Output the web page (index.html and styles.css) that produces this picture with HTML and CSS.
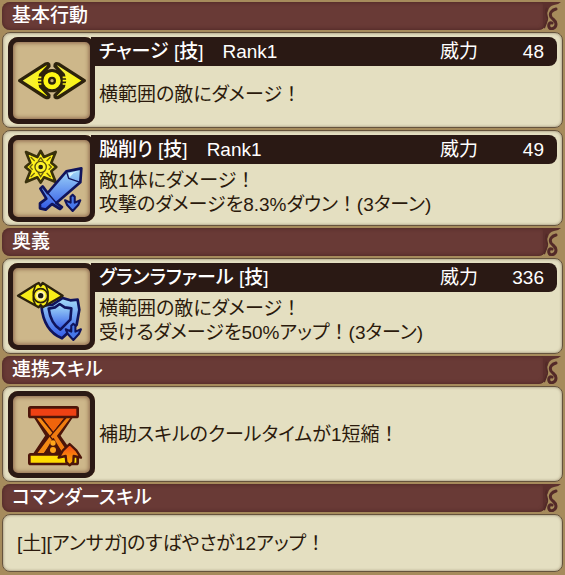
FILE: index.html
```html
<!DOCTYPE html>
<html lang="ja">
<head>
  <meta charset="UTF-8" />
  <meta name="viewport" content="width=device-width, initial-scale=1.0"/>
  <title>基本行動</title>
  <link rel="stylesheet" href="styles.css">
</head>
<body>
  <!-- shared shapes -->
  <svg class="defs" aria-hidden="true">
    <defs>
      <linearGradient id="blue" x1="0" y1="0" x2="0" y2="1">
        <stop offset="0" stop-color="#a4dcf8"/>
        <stop offset="1" stop-color="#3158e8"/>
      </linearGradient>
      <linearGradient id="yellow" x1="0" y1="0" x2="1" y2="0">
        <stop offset="0" stop-color="#f0ea50"/>
        <stop offset="1" stop-color="#fffb00"/>
      </linearGradient>
      <linearGradient id="fire" x1="0" y1="0" x2="0" y2="1">
        <stop offset="0" stop-color="#f2441a"/>
        <stop offset="1" stop-color="#ffb800"/>
      </linearGradient>
      <symbol id="curl" viewBox="0 0 18 28">
        <path d="M0 0H18Q15 3 11 3Q6 4 5 9L3 13Q4 16 3 21L0 26Z" fill="#5c302d"/>
        <path d="M13 7C9 8 6 11 8 15C10 18 13 18 13 22C13 27 7 28 6 25C5 22 7 20 9 21" fill="none" stroke="#532a28" stroke-width="3" stroke-linecap="round"/>
        <path d="M4 6C1 11 5 13 4 18C3 21 2 24 1 26" fill="none" stroke="#532a28" stroke-width="2"/>
      </symbol>
      <symbol id="down" viewBox="0 0 54 56">
        <path d="M27 4L33 10V27L49 20L43 34L27 51L11 34L5 20L21 27V10Z" fill="#4676ea" stroke="#10145c" stroke-width="6" stroke-linejoin="round"/>
      </symbol>
    </defs>
  </svg>

  <main class="skills">
    <section class="group">
      <h2 class="heading"><span class="heading-text">基本行動</span><svg class="curl"><use href="#curl"/></svg></h2>
      <article class="card">
        <svg class="icon" viewBox="12 9 261 261">
          <g fill="url(#yellow)" stroke="#2c220c" stroke-width="10" stroke-linejoin="round">
            <path d="M47 140L123 91Q136 85 135 96L110 122L106 140L110 158L135 184Q136 195 123 189Z"/>
            <path d="M241 140L165 91Q152 85 153 96L178 122L182 140L178 158L153 184Q152 195 165 189Z"/>
          </g>
          <circle cx="144" cy="140" r="35" fill="#2c220c"/>
          <circle cx="144" cy="140" r="19" fill="none" stroke="#fff714" stroke-width="14"/>
          <circle cx="144" cy="140" r="5" fill="#c5ab72"/>
          <path d="M95 130H112M95 140H112M95 150H112M176 130H193M176 140H193M176 150H193" stroke="#fff714" stroke-width="5"/>
        </svg>
        <div class="body">
          <header class="bar">
            <h3 class="name">チャージ [技]　Rank1</h3>
            <span class="power">威力</span><span class="value">48</span>
          </header>
          <p class="text">横範囲の敵にダメージ<span class="mark">！</span></p>
        </div>
      </article>
      <article class="card">
        <svg class="icon" viewBox="12 9 261 261">
          <path d="M110 57L120 75L155 60L142 92L157 105L142 118L155 150L120 136L110 152L100 136L66 150L79 118L64 105L79 92L66 60L100 75Z" fill="#fff21c" stroke="#39310c" stroke-width="8" stroke-linejoin="round"/>
          <path d="M110 76L118 89M110 76L102 89M134 97L142 105L134 113M86 97L78 105L86 113M102 121L110 134L118 121M128 87L140 75M92 87L80 75M128 123L140 135M92 123L80 135" fill="none" stroke="#6d6212" stroke-width="4"/>
          <circle cx="110" cy="105" r="17" fill="#fff52a" stroke="#5d530e" stroke-width="4"/>
          <circle cx="110" cy="105" r="7" fill="#292412"/>
          <g fill="url(#blue)" stroke="#10145c" stroke-width="8" stroke-linejoin="round">
            <path d="M187 118L232 109L229 151L157 213L174 225L168 231L144 216L125 233L108 229V214L127 200L109 170L116 163L131 183Z"/>
            <path d="M187 118L194 139L229 151M131 183L157 213" fill="none" stroke-width="4"/>
          </g>
          <path d="M194 124L225 117L209 123L197 136Z" fill="#d7f2ff"/>
          <use href="#down" x="177" y="184" width="58" height="58"/>
        </svg>
        <div class="body">
          <header class="bar">
            <h3 class="name">脳削り [技]　Rank1</h3>
            <span class="power">威力</span><span class="value">49</span>
          </header>
          <p class="text">敵1体にダメージ<span class="mark">！</span><br>攻撃のダメージを8.3%ダウン<span class="mark">！</span>(3ターン)</p>
        </div>
      </article>
    </section>

    <section class="group">
      <h2 class="heading"><span class="heading-text">奥義</span><svg class="curl"><use href="#curl"/></svg></h2>
      <article class="card">
        <svg class="icon" viewBox="12 14 261 261">
          <g stroke="#10145c" stroke-width="8" stroke-linejoin="round">
            <path d="M112 142L146 139L176 119L199 126L221 124L226 154L218 199L174 240Q119 218 112 142Z" fill="url(#blue)"/>
            <path d="M167 137L182 147L202 150L199 184L169 214Q140 196 134 151L153 147Z" fill="url(#blue)"/>
          </g>
          <g fill="#f8ee18" stroke="#2c220c" stroke-width="7" stroke-linejoin="round">
            <path d="M42 112L98 77L104 74L110 82L116 74L176 112L116 147L110 140L104 147Z"/>
            <path d="M94 82L88 100V125L95 141M126 82L132 100V125L126 141" fill="none" stroke-width="5"/>
            <circle cx="110" cy="112" r="21" stroke-width="5"/>
          </g>
          <circle cx="110" cy="112" r="14" fill="#fff6ac"/>
          <circle cx="110" cy="112" r="8" fill="#171714"/>
          <use href="#down" x="179" y="192" width="58" height="58"/>
        </svg>
        <div class="body">
          <header class="bar">
            <h3 class="name">グランラファール [技]</h3>
            <span class="power">威力</span><span class="value">336</span>
          </header>
          <p class="text">横範囲の敵にダメージ<span class="mark">！</span><br>受けるダメージを50%アップ<span class="mark">！</span>(3ターン)</p>
        </div>
      </article>
    </section>

    <section class="group">
      <h2 class="heading"><span class="heading-text">連携スキル</span><svg class="curl"><use href="#curl"/></svg></h2>
      <article class="card">
        <svg class="icon" viewBox="12 12 261 261">
          <g stroke="#4c1509" stroke-width="8" stroke-linejoin="round">
            <path d="M92 88H204L165 146L204 202H91L128 146Z" fill="#4c1509"/>
            <path d="M113 91H183L148 137Z" fill="#f0640c" stroke-width="3"/>
            <path d="M94 91H110L157 149L119 202H95L136 147Z" fill="#f58a14" stroke-width="4"/>
            <path d="M187 91H203L161 147L198 202H178L138 148Z" fill="#f07c10" stroke-width="4"/>
            <path d="M148 153L121 201H176Z" fill="#4c1509" stroke-width="2"/>
            <rect x="76" y="61" width="145" height="29" rx="4" fill="#ee4114"/>
            <rect x="76" y="202" width="145" height="29" rx="4" fill="#ffdc00"/>
          </g>
          <circle cx="147" cy="168" r="8" fill="#ffa51a"/>
          <circle cx="147" cy="189" r="9" fill="#ffa51a"/>
          <path d="M197 171L217 190L231 212L209 207L208 225L197 235L187 225L185 207L164 212L177 190Z" fill="url(#fire)" stroke="#4c1509" stroke-width="7" stroke-linejoin="round"/>
        </svg>
        <div class="body">
          <p class="text">補助スキルのクールタイムが1短縮<span class="mark">！</span></p>
        </div>
      </article>
    </section>

    <section class="group">
      <h2 class="heading"><span class="heading-text">コマンダースキル</span><svg class="curl"><use href="#curl"/></svg></h2>
      <article class="card card-plain">
        <p class="text">[土][アンサガ]のすばやさが12アップ<span class="mark">！</span></p>
      </article>
    </section>
  </main>
</body>
</html>
```

FILE: styles.css
```css
* {
  margin: 0;
  padding: 0;
  box-sizing: border-box;
}

body {
  background: #a68b5c;
  color: #2b1a0c;
  font-family: "Liberation Sans", "Noto Sans CJK JP", sans-serif;
  font-size: 19px;
  line-height: 24px;
  font-feature-settings: "palt";
}

.defs {
  position: absolute;
  width: 0;
  height: 0;
}

.skills {
  display: flex;
  flex-direction: column;
  gap: 2px;
  padding: 2px;
}

.group {
  display: flex;
  flex-direction: column;
  gap: 2px;
}

.heading {
  display: flex;
  height: 28px;
  color: #fff;
  font-size: 19px;
  font-weight: 500;
  line-height: 28px;
}

.heading-text {
  flex: 1;
  padding-left: 10px;
  background: #693a36;
  border-radius: 8px 0 6px 8px;
  box-shadow: inset 0 0 4px #482321;
}

.curl {
  width: 18px;
  height: 28px;
  margin-left: -2px;
  margin-right: 2px;
}

.card {
  display: flex;
  min-height: 96px;
  padding: 4px 5px 3px;
  background: #e4dfc1;
  border: 1px solid #65533d;
  border-radius: 8px;
  box-shadow: inset 0 0 3px #8b7b60;
}

.icon {
  flex: none;
  width: 87px;
  height: 87px;
  background: #cdb78a;
  border-radius: 10px;
  box-shadow: inset 0 0 0 5px #2a1914, inset 0 0 4px 6px #8a654a;
}

.body {
  flex: 1;
  display: flex;
  flex-direction: column;
}

.bar {
  display: flex;
  height: 29px;
  margin-left: -4px;
  padding: 0 13px 0 8px;
  background: #2a1914;
  border-radius: 0 8px 8px 0;
  color: #fff;
  line-height: 29px;
}

.name {
  flex: 1;
  font-size: 19px;
  font-weight: 500;
}

.value {
  width: 66px;
  text-align: right;
}

.body .text {
  flex: 1;
  display: block;
  align-content: center;
  padding-left: 4px;
}

/* full-width exclamation mark */
.mark {
  font-feature-settings: normal;
}

.card-plain {
  min-height: 58px;
  align-items: center;
  padding-left: 14px;
}
```
